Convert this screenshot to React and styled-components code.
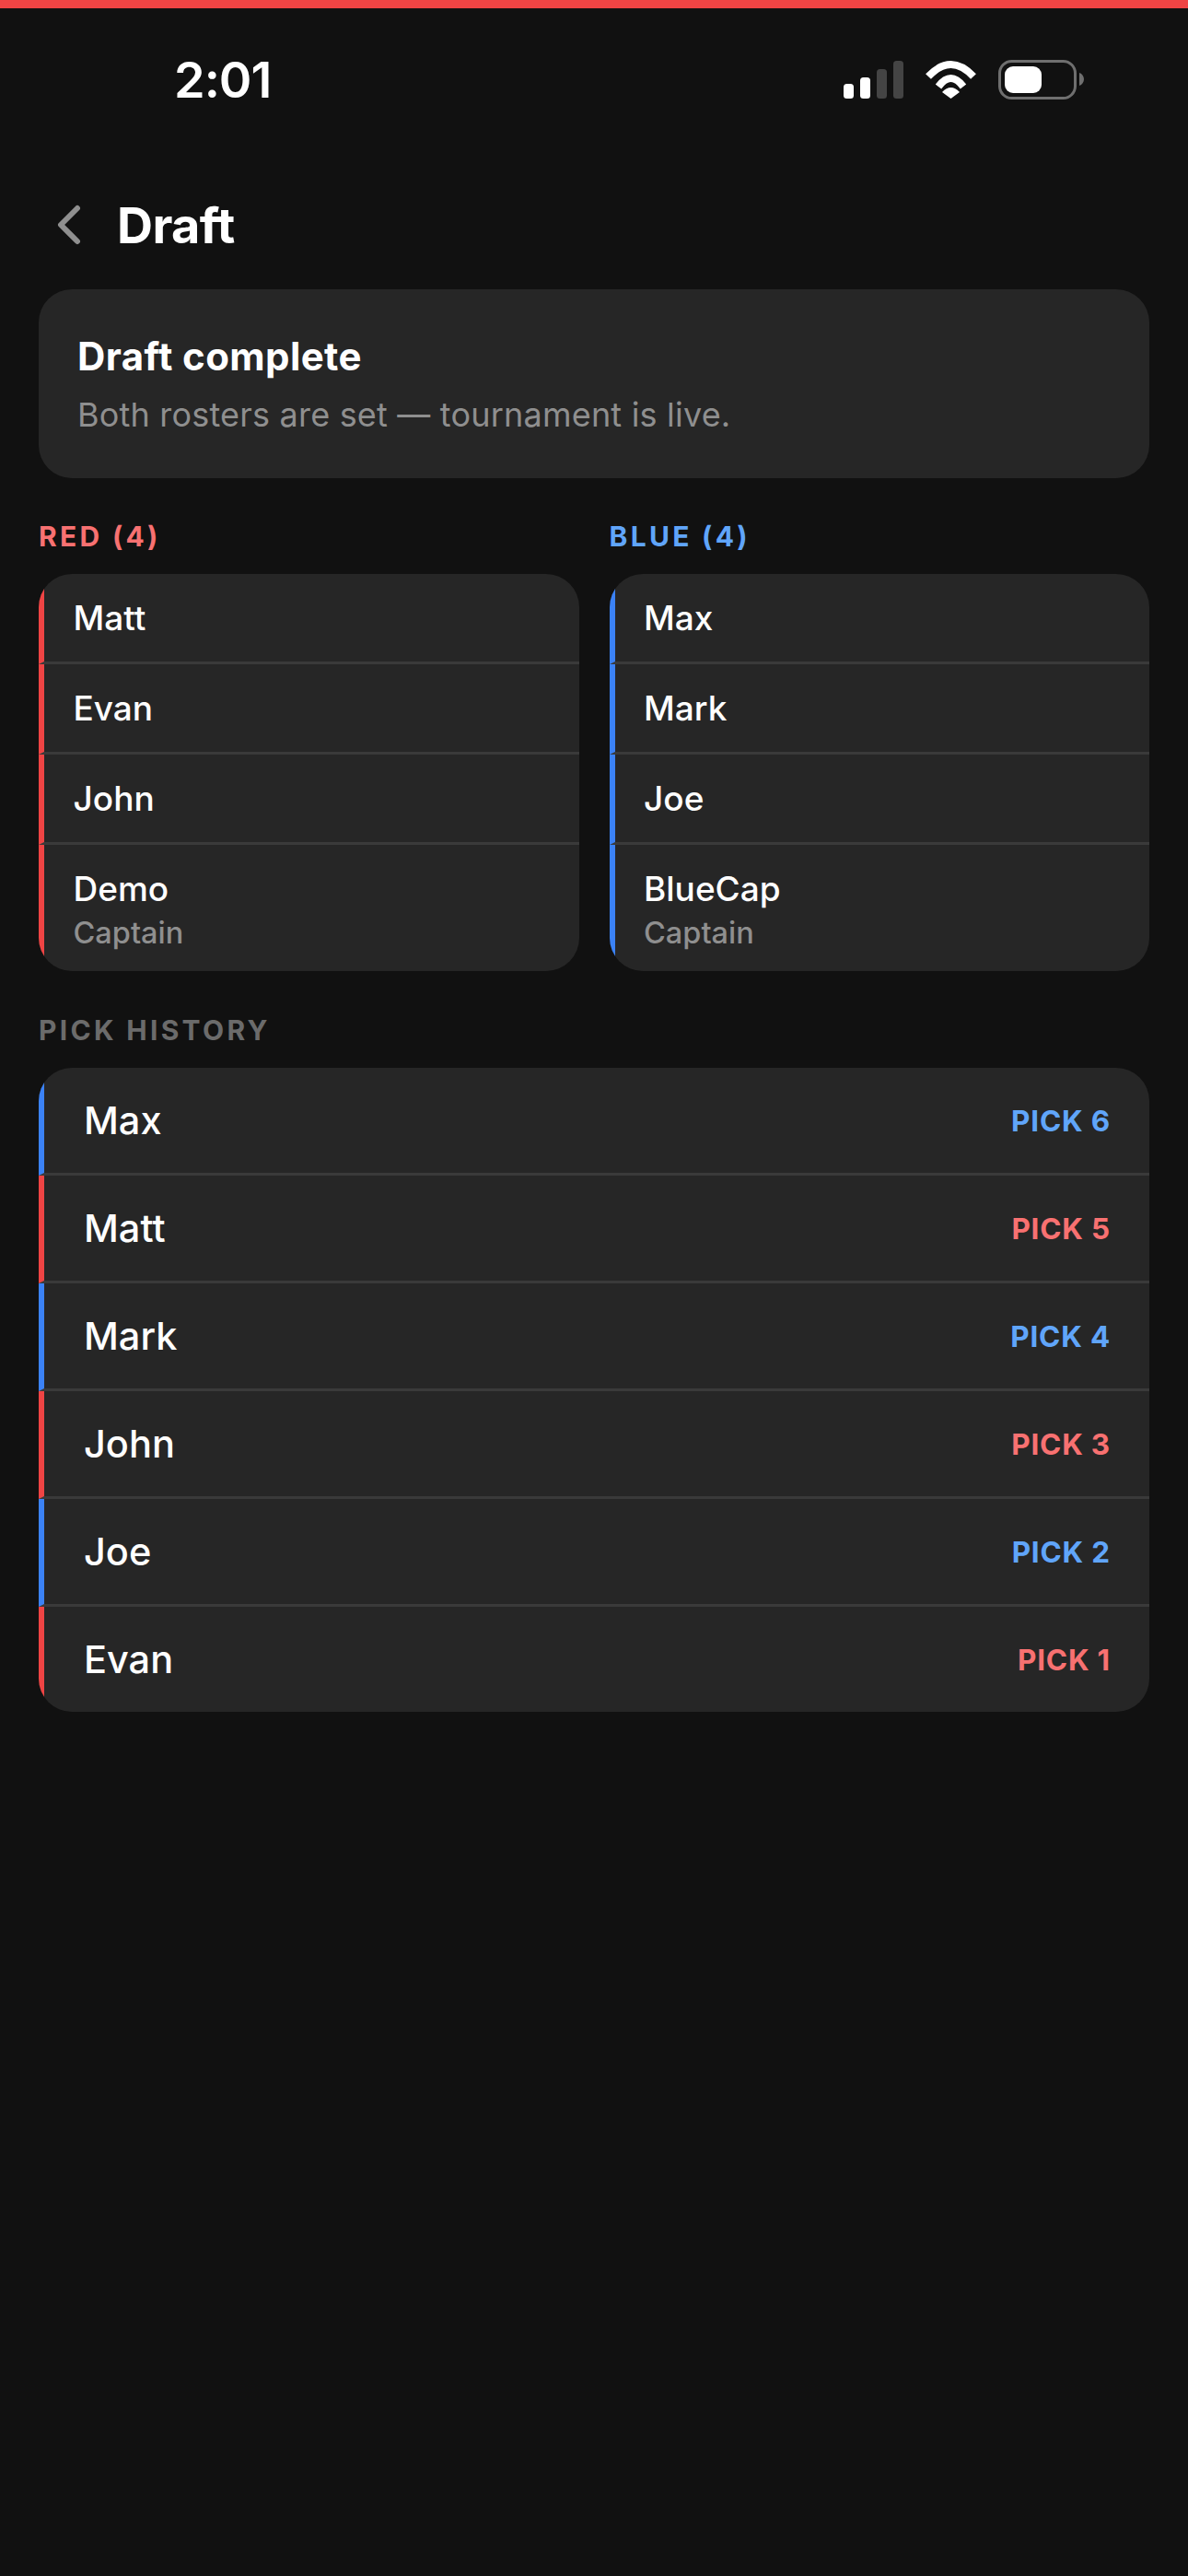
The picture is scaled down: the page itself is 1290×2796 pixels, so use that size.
import React from "react"
import styled, { createGlobalStyle } from "styled-components"

const RED = "#ef4444"
const BLUE = "#3b82f6"
const RED_TEXT = "#f87171"
const BLUE_TEXT = "#60a5fa"

const Global = createGlobalStyle`
  html, body { margin: 0; padding: 0; background: #111111; }
  body { font-family: Inter, "Noto Sans", sans-serif; color: #fff; }
  * { box-sizing: border-box; }
`

const Page = styled.div`
  width: 1290px;
  height: 2796px;
  background: #111111;
  border-top: 9px solid ${RED};
  overflow: hidden;
`

const StatusBar = styled.div`
  height: 181px;
  padding: 0 113px 0 189px;
  display: flex;
  justify-content: space-between;
  align-items: flex-start;
`

const Time = styled.div`
  font-size: 54px;
  font-weight: 600;
  line-height: 66px;
  margin-top: 45px;
  letter-spacing: -1px;
`

const StatusIcons = styled.svg`
  margin-top: 56px;
  display: block;
`

const Header = styled.div`
  height: 108px;
  margin-bottom: 16px;
  padding: 0 42px 0 62px;
  display: flex;
  align-items: center;
  gap: 39px;
`

const Title = styled.h1`
  margin: 0;
  font-size: 54px;
  font-weight: 700;
  letter-spacing: -0.6px;
`

const Content = styled.div`
  padding: 0 42px;
`

const Card = styled.div`
  background: #262626;
  border-radius: 36px;
  overflow: hidden;
`

const Banner = styled(Card)`
  height: 205px;
  padding: 47px 42px 0;
`

const BannerTitle = styled.div`
  font-size: 42px;
  font-weight: 700;
  line-height: 52px;
  letter-spacing: 0.4px;
`

const BannerText = styled.div`
  margin-top: 13px;
  font-size: 36px;
  line-height: 48px;
  letter-spacing: 0.2px;
  color: #8f8f8f;
`

const Teams = styled.div`
  margin-top: 45px;
  display: grid;
  grid-template-columns: 1fr 1fr;
  gap: 33px;
`

const TeamLabel = styled.div`
  font-size: 30px;
  font-weight: 700;
  line-height: 36px;
  letter-spacing: 3.3px;
  margin-bottom: 23px;
  color: ${(p) => p.$color};
`

const RosterRow = styled.div`
  border-left: 6px solid ${(p) => p.$color};
  border-bottom: 3px solid #3a3a3a;
  padding: 0 0 0 31.5px;
  min-height: 98px;
  display: flex;
  flex-direction: column;
  justify-content: center;

  &:last-child {
    border-bottom: 0;
    padding: 25px 0 19px 31.5px;
  }
`

const RosterName = styled.div`
  font-size: 37px;
  font-weight: 500;
  line-height: 46px;
`

const Captain = styled.div`
  margin-top: 3px;
  font-size: 32.5px;
  font-weight: 500;
  line-height: 44px;
  color: #8f8f8f;
`

const SectionLabel = styled.div`
  margin: 46px 0 23px;
  font-size: 30px;
  font-weight: 700;
  line-height: 36px;
  letter-spacing: 3.3px;
  color: #6b6b6b;
`

const PickRow = styled.div`
  height: 117px;
  border-left: 6px solid ${(p) => p.$color};
  border-bottom: 3px solid #3a3a3a;
  padding: 0 42px 0 43px;
  display: flex;
  align-items: center;
  justify-content: space-between;

  &:last-child {
    height: 114px;
    border-bottom: 0;
  }
`

const PickName = styled.div`
  font-size: 41.5px;
  font-weight: 500;
`

const PickTag = styled.div`
  font-size: 31.5px;
  font-weight: 700;
  letter-spacing: 0.8px;
  color: ${(p) => p.$color};
`

const BackIcon = () => (
  <svg width="26" height="44" viewBox="0 0 26 44" fill="none">
    <path d="M22 4 L4 22 L22 40" stroke="#8f8f8f" strokeWidth="6" strokeLinecap="round" strokeLinejoin="round" />
  </svg>
)

const StatusGlyphs = () => (
  <StatusIcons width="261" height="44" viewBox="0 0 261 44" fill="none">
    <rect x="0" y="26" width="11" height="16" rx="3.5" fill="#fff" />
    <rect x="18" y="19" width="11" height="23" rx="3.5" fill="#fff" />
    <rect x="36" y="10" width="11" height="32" rx="3.5" fill="#444" />
    <rect x="54" y="1" width="11" height="41" rx="3.5" fill="#444" />
    <path d="M92 18 Q116.5 -8 141 18" stroke="#fff" strokeWidth="8" />
    <path d="M103 29 Q116.5 11 130 29" stroke="#fff" strokeWidth="8" />
    <path d="M107 35 Q116.5 25 126 35 L116.5 42 Z" fill="#fff" />
    <rect x="169.5" y="1.5" width="82" height="40" rx="13" stroke="#6f6f6f" strokeWidth="3" />
    <rect x="175" y="7" width="40" height="29" rx="9" fill="#fff" />
    <path d="M256 14 C 259 15 261 18 261 21 C 261 24 259 27 256 28 Z" fill="#6f6f6f" />
  </StatusIcons>
)

const teams = [
  { label: "RED (4)", color: RED, text: RED_TEXT, players: ["Matt", "Evan", "John", "Demo"] },
  { label: "BLUE (4)", color: BLUE, text: BLUE_TEXT, players: ["Max", "Mark", "Joe", "BlueCap"] },
]

const picks = [
  { name: "Max", n: 6, blue: true },
  { name: "Matt", n: 5 },
  { name: "Mark", n: 4, blue: true },
  { name: "John", n: 3 },
  { name: "Joe", n: 2, blue: true },
  { name: "Evan", n: 1 },
]

export default function App() {
  return (
    <Page>
      <Global />
      <StatusBar>
        <Time>2:01</Time>
        <StatusGlyphs />
      </StatusBar>
      <Header>
        <BackIcon />
        <Title>Draft</Title>
      </Header>
      <Content>
        <Banner>
          <BannerTitle>Draft complete</BannerTitle>
          <BannerText>Both rosters are set — tournament is live.</BannerText>
        </Banner>
        <Teams>
          {teams.map((team) => (
            <div key={team.label}>
              <TeamLabel $color={team.text}>{team.label}</TeamLabel>
              <Card>
                {team.players.map((name, i) => (
                  <RosterRow key={name} $color={team.color}>
                    <RosterName>{name}</RosterName>
                    {i === team.players.length - 1 && <Captain>Captain</Captain>}
                  </RosterRow>
                ))}
              </Card>
            </div>
          ))}
        </Teams>
        <SectionLabel>PICK HISTORY</SectionLabel>
        <Card>
          {picks.map((pick) => (
            <PickRow key={pick.n} $color={pick.blue ? BLUE : RED}>
              <PickName>{pick.name}</PickName>
              <PickTag $color={pick.blue ? BLUE_TEXT : RED_TEXT}>PICK {pick.n}</PickTag>
            </PickRow>
          ))}
        </Card>
      </Content>
    </Page>
  )
}
